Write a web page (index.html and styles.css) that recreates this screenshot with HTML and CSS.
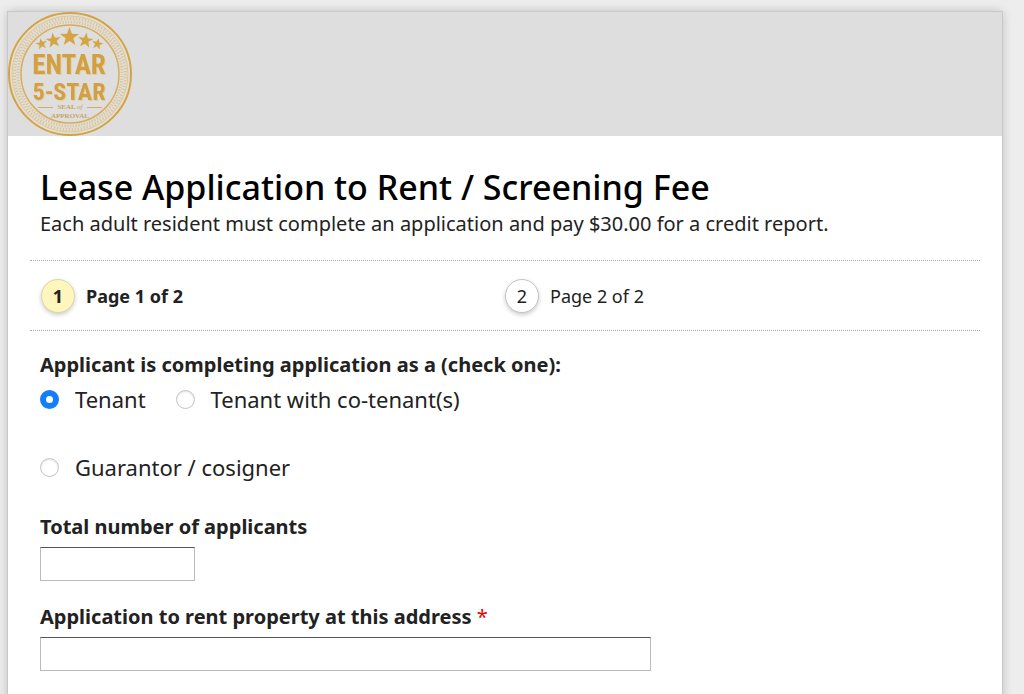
FILE: index.html
```html
<!doctype html>
<html lang="en">
  <head>
    <meta charset="utf-8" />
    <meta name="viewport" content="width=device-width, initial-scale=1" />
    <title>Lease Application to Rent / Screening Fee</title>
    <link rel="stylesheet" href="styles.css">
  </head>
  <body>
    <div class="container">
      <div class="banner">
        <svg class="seal" viewBox="0 0 124 124" role="img" aria-label="Entar 5-Star Seal of Approval">
          <circle cx="62" cy="62" r="61" fill="#e1dfda" stroke="#d5a343" stroke-width="2" />
          <circle cx="62" cy="62" r="58" fill="none" stroke="#e2c68c" stroke-width="1" />
          <!-- rope border -->
          <circle cx="62" cy="62" r="55.5" fill="none" stroke="#dbc79f" stroke-width="3" stroke-dasharray="1.4 1.6" />
          <circle cx="62" cy="62" r="52" fill="none" stroke="#dbc79f" stroke-width="3" stroke-dasharray="1.4 1.4" stroke-dashoffset="1" />
          <circle cx="62" cy="62" r="49" fill="#dedede" stroke="#d9ad58" stroke-width="1.5" />
          <defs>
            <path id="star" d="M0-10 2.4-3.2 9.5-3.1 3.8 1.2 5.9 8.1 0 4-5.9 8.1-3.8 1.2-9.5-3.1-2.4-3.2Z" />
          </defs>
          <g fill="#d5a443">
            <use href="#star" transform="translate(61.5 25)" />
            <use href="#star" transform="translate(45.5 28.5) rotate(-8) scale(.8)" />
            <use href="#star" transform="translate(77.5 28.5) rotate(8) scale(.8)" />
            <use href="#star" transform="translate(33.5 32) rotate(-12) scale(.6)" />
            <use href="#star" transform="translate(89.5 32) rotate(12) scale(.6)" />
          </g>
          <g class="seal-name" text-anchor="middle">
            <text class="seal-top" x="61" y="62">ENTAR</text>
            <text class="seal-bottom" x="61" y="88">5-STAR</text>
          </g>
          <path d="M30 95.5H45M79 95.5H94" stroke="#d5ac60" stroke-width="1" />
          <g class="seal-small" text-anchor="middle">
            <text x="62" y="97">SEAL <tspan class="seal-of">of</tspan></text>
            <text x="62" y="106">APPROVAL</text>
          </g>
        </svg>
      </div>

      <form class="form" action="#" method="post">
        <header class="info">
          <h1>Lease Application to Rent / Screening Fee</h1>
          <p>Each adult resident must complete an application and pay $30.00 for a credit report.</p>
        </header>

        <ol class="steps">
          <li class="step step-current"><span class="step-number">1</span>Page 1 of 2</li>
          <li class="step"><span class="step-number">2</span>Page 2 of 2</li>
        </ol>

        <fieldset class="field">
          <legend>Applicant is completing application as a (check one):</legend>
          <div class="choices">
            <label class="choice"><input type="radio" name="applicantType" value="tenant" checked />Tenant</label>
            <label class="choice"><input type="radio" name="applicantType" value="cotenant" />Tenant with co-tenant(s)</label>
            <label class="choice"><input type="radio" name="applicantType" value="guarantor" />Guarantor / cosigner</label>
          </div>
        </fieldset>

        <div class="field">
          <label for="applicants">Total number of applicants</label>
          <input type="text" id="applicants" class="text small" />
        </div>

        <div class="field">
          <label for="address">Application to rent property at this address <span class="req">*</span></label>
          <input type="text" id="address" class="text large" required />
        </div>
      </form>
    </div>
  </body>
</html>
```

FILE: styles.css
```css
body {
  margin: 0;
  padding: 12px 22px 0 8px;
  background: #ededed;
  color: #222;
  font-family: "Lucida Grande", "Noto Sans", sans-serif;
  font-size: 20px;
}
.container {
  min-height: 100vh;
  background: white;
  box-shadow: 0 0 0 1px #c8c8c8, 0 0 10px rgba(0, 0, 0, 0.22);
}
.banner {
  background: #dedede;
}
.seal {
  display: block;
  width: 124px;
  height: 124px;
}
.seal-name {
  fill: #d2a044;
  filter: drop-shadow(1px 1px 0 #e4cd9c);
  font-family: "Roboto Condensed", "Liberation Sans Narrow", "Roboto", sans-serif;
  font-weight: bold;
}
.seal-top {
  font-size: 27px;
}
.seal-bottom {
  font-size: 24px;
}
.seal-small {
  fill: #c9a460;
  font-family: "Liberation Serif", serif;
  font-size: 7px;
  font-weight: bold;
}
.seal-of {
  font-style: italic;
  font-weight: normal;
}
.form {
  padding: 28px 22px;
}
.info {
  padding: 0 10px 22px;
  border-bottom: 1px dotted #aaa;
}
h1 {
  margin: 0;
  color: #000;
  font-size: 34px;
  font-weight: 500;
  line-height: 46px;
}
.info p {
  margin: 0;
  font-size: 20px;
  line-height: 28px;
}
.steps {
  display: grid;
  grid-template-columns: 1fr 1fr;
  margin: 0;
  padding: 18px 11px 17px;
  border-bottom: 1px dotted #aaa;
  list-style: none;
  font-size: 18px;
}
.step {
  display: flex;
  align-items: center;
  gap: 11px;
}
.step-current {
  font-weight: bold;
}
.step-number {
  display: flex;
  align-items: center;
  justify-content: center;
  box-sizing: border-box;
  width: 34px;
  height: 34px;
  border: 1px solid #c4c4c4;
  border-radius: 50%;
  background: white;
  box-shadow: 0 2px 4px rgba(0, 0, 0, 0.2);
}
.step-current .step-number {
  border-color: #ddd5aa;
  background: #fff6be;
}
.field {
  margin: 20px 0 0;
  padding: 0 10px 2px;
  border: none;
}
.field > label,
legend {
  display: block;
  padding: 0;
  font-size: 20px;
  font-weight: bold;
  line-height: 28px;
}
.choices {
  display: flex;
  flex-wrap: wrap;
  gap: 36px 30px;
  max-width: 611px;
  padding: 4px 0 8px;
}
.choice {
  display: flex;
  align-items: center;
  gap: 16px;
  font-size: 22px;
  line-height: 32px;
}
.choice input {
  appearance: none;
  width: 19px;
  height: 19px;
  margin: 0;
  border: 1px solid #c4c4c4;
  border-radius: 50%;
  background: white;
  box-shadow: inset 0 1px 2px rgba(0, 0, 0, 0.12);
}
.choice input:checked {
  border: 6px solid #147dfb;
  box-shadow: none;
}
.text {
  display: block;
  box-sizing: border-box;
  height: 34px;
  margin: 6px 0 0;
  padding: 4px 6px;
  border: 1px solid #bbb;
  border-top-color: #555;
  border-radius: 0;
  background: white;
  color: #222;
  font: inherit;
}
.small {
  width: 155px;
}
.large {
  width: 100%;
  max-width: 611px;
}
.req {
  color: #e00;
  font-weight: normal;
}
```
